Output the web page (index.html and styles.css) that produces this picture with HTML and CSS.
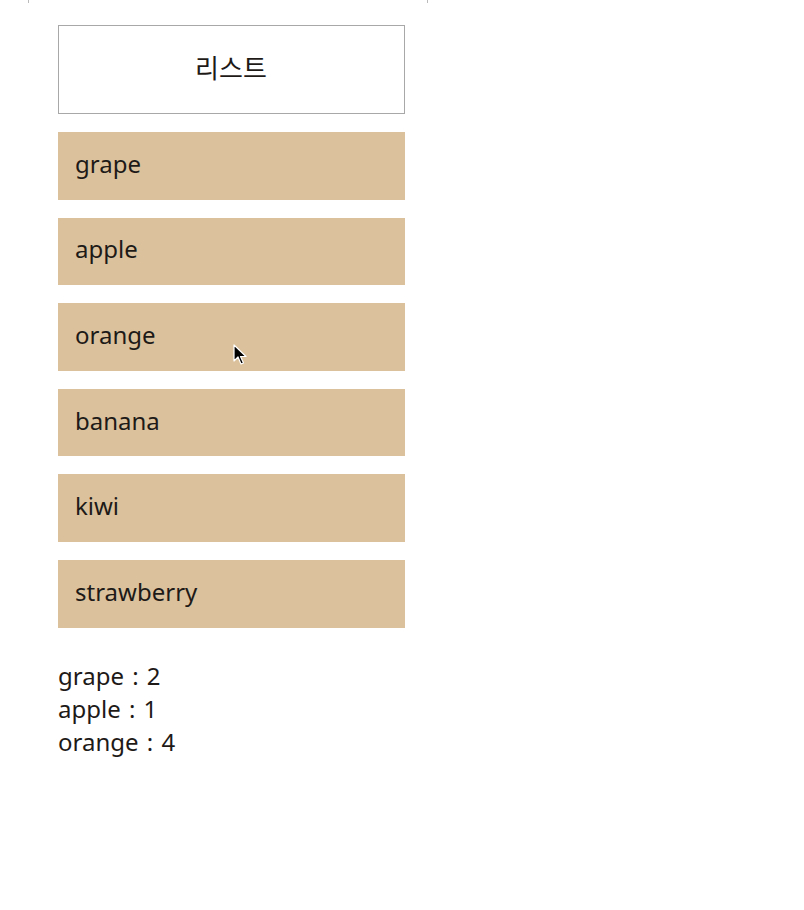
FILE: index.html
```html
<!DOCTYPE html>
<html lang="ko">
<head>
<meta charset="utf-8">
<title>리스트</title>
<link rel="stylesheet" href="styles.css">
</head>
<body>
<div class="topframe"></div>
<main class="wrap">
  <div class="title">리스트</div>
  <ul class="list">
    <li class="item">grape</li>
    <li class="item">apple</li>
    <li class="item item-cursor">orange
      <svg class="cursor" width="14" height="22" viewBox="0 0 14 22"><path d="M1 1 L1 17 L5 13 L8 20 L10.5 19 L7.5 12.5 L13 12.5 Z" fill="#000" stroke="#fff" stroke-width="1.2" stroke-linejoin="round"/></svg>
    </li>
    <li class="item">banana</li>
    <li class="item">kiwi</li>
    <li class="item">strawberry</li>
  </ul>
  <div class="counts">
    <div>grape : 2</div>
    <div>apple : 1</div>
    <div>orange : 4</div>
  </div>
</main>
</body>
</html>
```
FILE: styles.css
```css
html, body {
  margin: 0;
  padding: 0;
  background: #fff;
}
body {
  font-family: "Noto Sans", "Noto Sans CJK KR", sans-serif;
  color: #1e1a18;
}
.topframe {
  position: absolute;
  left: 28px;
  top: 0;
  width: 398px;
  height: 3px;
  border-left: 1px solid #bbb;
  border-right: 1px solid #bbb;
}
.wrap {
  width: 347px;
  margin-left: 58px;
  padding-top: 25px;
}
.title {
  box-sizing: border-box;
  height: 89px;
  border: 1px solid #a8a8a8;
  display: flex;
  align-items: center;
  justify-content: center;
  font-family: "Noto Sans CJK KR", sans-serif;
  font-size: 26px;
  padding-bottom: 6px;
  padding-right: 1px;
}
.list {
  list-style: none;
  margin: 18px 0 0;
  padding: 0;
  display: flex;
  flex-direction: column;
  gap: 18px;
}
.item {
  position: relative;
  height: 67.6px;
  background: #dbc29c;
  display: flex;
  align-items: center;
  padding-left: 17px;
  padding-bottom: 5px;
  box-sizing: border-box;
  font-size: 24px;
}
.cursor {
  position: absolute;
  left: 175px;
  top: 41px;
}
.counts {
  margin-top: 31px;
  font-size: 24px;
  line-height: 33px;
  word-spacing: 2px;
}
```
